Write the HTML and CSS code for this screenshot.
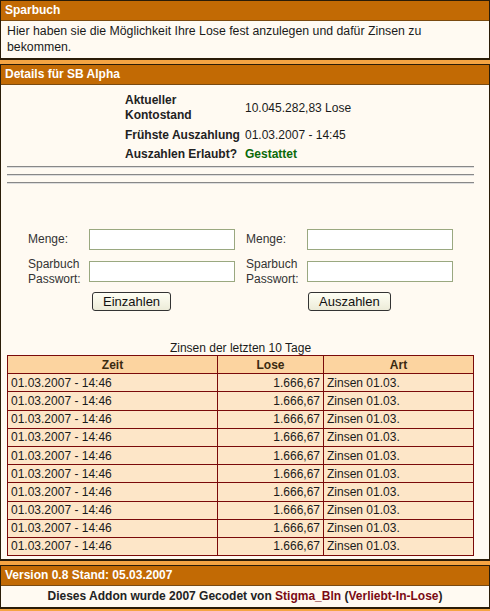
FILE: index.html
```html
<!DOCTYPE html>
<html>
<head>
<meta charset="utf-8">
<link rel="stylesheet" href="styles.css">
</head>
<body>
<div class="panel">
  <div class="head">Sparbuch</div>
  <div class="body intro">Hier haben sie die Möglichkeit Ihre Lose fest anzulegen und dafür Zinsen zu bekommen.</div>
</div>
<div class="panel">
  <div class="head">Details für SB Alpha</div>
  <div class="body details">
    <div class="info">
      <div class="lbl">Aktueller<br>Kontostand</div><div class="val">10.045.282,83 Lose</div>
      <div class="lbl">Frühste Auszahlung</div><div class="val">01.03.2007 - 14:45</div>
      <div class="lbl">Auszahlen Erlaubt?</div><div class="val ok">Gestattet</div>
    </div>
    <div class="rules"><hr><hr><hr></div>
    <div class="forms">
      <div class="form">
        <div class="frow"><span class="flbl">Menge:</span><span class="inp"></span></div>
        <div class="frow"><span class="flbl">Sparbuch<br>Passwort:</span><span class="inp"></span></div>
        <div class="brow"><span class="btn">Einzahlen</span></div>
      </div>
      <div class="form right">
        <div class="frow"><span class="flbl">Menge:</span><span class="inp"></span></div>
        <div class="frow"><span class="flbl">Sparbuch<br>Passwort:</span><span class="inp"></span></div>
        <div class="brow"><span class="btn">Auszahlen</span></div>
      </div>
    </div>
    <div class="caption">Zinsen der letzten 10 Tage</div>
    <table class="zins">
      <tr><th class="c1">Zeit</th><th class="c2">Lose</th><th class="c3">Art</th></tr>
      <tr><td>01.03.2007 - 14:46</td><td class="num">1.666,67</td><td>Zinsen 01.03.</td></tr>
      <tr><td>01.03.2007 - 14:46</td><td class="num">1.666,67</td><td>Zinsen 01.03.</td></tr>
      <tr><td>01.03.2007 - 14:46</td><td class="num">1.666,67</td><td>Zinsen 01.03.</td></tr>
      <tr><td>01.03.2007 - 14:46</td><td class="num">1.666,67</td><td>Zinsen 01.03.</td></tr>
      <tr><td>01.03.2007 - 14:46</td><td class="num">1.666,67</td><td>Zinsen 01.03.</td></tr>
      <tr><td>01.03.2007 - 14:46</td><td class="num">1.666,67</td><td>Zinsen 01.03.</td></tr>
      <tr><td>01.03.2007 - 14:46</td><td class="num">1.666,67</td><td>Zinsen 01.03.</td></tr>
      <tr><td>01.03.2007 - 14:46</td><td class="num">1.666,67</td><td>Zinsen 01.03.</td></tr>
      <tr><td>01.03.2007 - 14:46</td><td class="num">1.666,67</td><td>Zinsen 01.03.</td></tr>
      <tr><td>01.03.2007 - 14:46</td><td class="num">1.666,67</td><td>Zinsen 01.03.</td></tr>
    </table>
  </div>
</div>
<div class="panel last">
  <div class="head">Version 0.8 Stand: 05.03.2007</div>
  <div class="body foot">Dieses Addon wurde 2007 Gecodet von <span class="red">Stigma_Bln</span> (<span class="red">Verliebt-In-Lose</span>)</div>
</div>
</body>
</html>
```
FILE: styles.css
```css
html, body {
  margin: 0;
  padding: 0;
  background: #f4a443;
  font-family: "Liberation Sans", Arial, sans-serif;
  font-size: 12px;
  color: #1a1a1a;
}
.panel {
  border: 1px solid #2a1c08;
  border-bottom-width: 2px;
  margin-bottom: 4px;
  background: #fffaf2;
}
.panel.last { margin-bottom: 0; }
.head {
  background: #c26a04;
  color: #fff;
  font-weight: bold;
  font-size: 12px;
  height: 19px;
  line-height: 19px;
  padding-left: 4px;
  border-bottom: 1px solid #7a4a10;
}
.body {
  padding: 2px 6px 3px 6px;
}
.intro {
  font-size: 12.3px;
  line-height: 16px;
}
.details {
  padding: 8px 15px 3px 6px;
}
.info {
  display: grid;
  grid-template-columns: 120px auto;
  margin-left: 118px;
  row-gap: 4.5px;
  align-items: center;
}
.lbl {
  font-weight: bold;
  line-height: 15px;
  color: #222;
}
.val { line-height: 15px; }
.val.ok { color: #0a6a0a; font-weight: bold; }
.rules {
  margin-top: 4px;
}
.rules hr {
  border: 0;
  border-top: 1px solid #888;
  border-bottom: 1px solid #ddd;
  margin: 0 0 6px 0;
  height: 0;
}
.forms {
  display: grid;
  grid-template-columns: 239px 220px;
  margin-top: 45px;
}
.form {
  padding-left: 21px;
}
.form.right { padding-left: 0; }
.frow {
  display: flex;
  align-items: center;
  height: 21px;
  margin-bottom: 11px;
}
.flbl {
  width: 61px;
  line-height: 15px;
  color: #333;
}
.inp {
  display: block;
  width: 144px;
  height: 19px;
  border: 1px solid #9aa880;
  background: #fff;
}
.brow {
  padding-left: 64px;
  margin-top: -1px;
  height: 19px;
}
.form.right .brow { padding-left: 62px; }
.btn {
  display: inline-block;
  border: 1px solid #333;
  border-radius: 3px;
  background: linear-gradient(#fffff4, #ecebd8);
  padding: 1px 10px;
  font-size: 13px;
  line-height: 15px;
  color: #111;
}
.caption {
  text-align: center;
  margin-top: 30px;
  line-height: 14px;
}
.zins {
  width: 467px;
  border-collapse: collapse;
  border: 1px solid #6a0000;
}
.zins tr { height: 18.2px; }
.zins th, .zins td {
  border: 1px solid #7a0a0a;
  padding: 0 3px;
  font-size: 12px;
  line-height: 16px;
}
.zins th {
  background: #fcd4a0;
  font-weight: bold;
  color: #3a2a10;
  text-align: center;
}
.zins td { background: #fde6c8; }
.c1 { width: 203px; }
.c2 { width: 99px; }
.num { text-align: right; }
.foot {
  text-align: center;
  font-weight: bold;
  padding: 3px 6px 4px;
  color: #222;
}
.red { color: #7a0a14; }
```
